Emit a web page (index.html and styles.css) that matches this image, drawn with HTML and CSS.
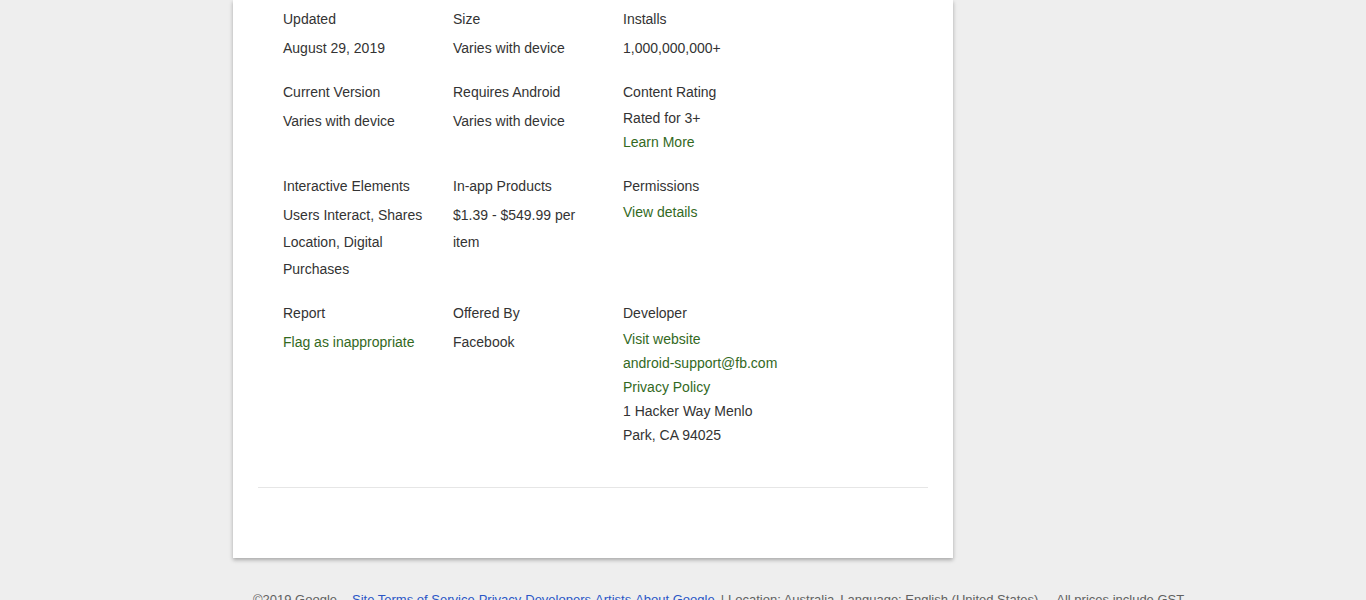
FILE: index.html
```html
<!DOCTYPE html>
<html>
<head>
<meta charset="utf-8">
<link rel="stylesheet" href="styles.css">
</head>
<body>
<div class="page">
  <div class="card">
    <div class="details">
      <div class="row">
        <div class="cell"><div class="label">Updated</div><div class="value">August 29, 2019</div></div>
        <div class="cell"><div class="label">Size</div><div class="value">Varies with device</div></div>
        <div class="cell"><div class="label">Installs</div><div class="value">1,000,000,000+</div></div>
      </div>
      <div class="row">
        <div class="cell"><div class="label">Current Version</div><div class="value">Varies with device</div></div>
        <div class="cell"><div class="label">Requires Android</div><div class="value">Varies with device</div></div>
        <div class="cell"><div class="label">Content Rating</div><div class="list"><div>Rated for 3+</div><div><a class="link" href="#">Learn More</a></div></div></div>
      </div>
      <div class="row">
        <div class="cell"><div class="label">Interactive Elements</div><div class="value">Users Interact, Shares Location, Digital Purchases</div></div>
        <div class="cell"><div class="label">In-app Products</div><div class="value">$1.39 - $549.99 per item</div></div>
        <div class="cell"><div class="label">Permissions</div><div class="list"><div><a class="link" href="#">View details</a></div></div></div>
      </div>
      <div class="row">
        <div class="cell"><div class="label">Report</div><div class="value"><a class="link" href="#">Flag as inappropriate</a></div></div>
        <div class="cell"><div class="label">Offered By</div><div class="value">Facebook</div></div>
        <div class="cell"><div class="label">Developer</div><div class="list"><div><a class="link" href="#">Visit website</a></div><div><a class="link" href="#">android-support@fb.com</a></div><div><a class="link" href="#">Privacy Policy</a></div><div>1 Hacker Way Menlo Park, CA 94025</div></div></div>
      </div>
    </div>
    <div class="divider"></div>
  </div>
  <div class="footer">
    <span class="copy">©2019 Google</span>
    <a href="#">Site Terms of Service</a>
    <a href="#">Privacy</a>
    <a href="#">Developers</a>
    <a href="#">Artists</a>
    <a href="#">About Google</a>
    <span class="sep">|</span>
    <span class="loc">Location: Australia</span>
    <span class="lang">Language: English (United States)</span>
    <span class="gst">All prices include GST.</span>
  </div>
</div>
</body>
</html>
```

FILE: styles.css
```css
html, body {
  margin: 0;
  padding: 0;
  background: #eeeeee;
  font-family: "Liberation Sans", Arial, sans-serif;
  color: #333333;
}
.page {
  width: 720px;
  margin-left: 233px;
}
.card {
  background: #ffffff;
  box-shadow: 0 2px 4px rgba(0, 0, 0, 0.3);
  padding: 7px 25px 70px;
}
.details {
  padding-left: 25px;
}
.row {
  display: grid;
  grid-template-columns: 170px 170px 170px;
  margin-bottom: 18px;
  align-items: start;
}
.label {
  font-size: 14px;
  line-height: 24px;
}
.value {
  font-size: 14px;
  line-height: 27px;
  margin-top: 4px;
  padding-right: 20px;
}
.list {
  font-size: 14px;
  line-height: 24px;
  margin-top: 2px;
  padding-bottom: 2px;
  padding-right: 6px;
}
.link {
  color: #33691e;
  text-decoration: none;
}
.divider {
  margin-top: 38px;
  height: 1px;
  background: #e6e6e6;
}
.footer {
  display: flex;
  align-items: baseline;
  padding: 33px 0 0 20px;
  font-size: 13px;
  line-height: 18px;
  color: #616161;
  white-space: nowrap;
}
.footer a {
  color: #2a56c6;
  text-decoration: none;
  margin-right: 4px;
}
.copy {
  margin-right: 15px;
}
.sep {
  margin: 0 4px 0 2px;
}
.loc {
  margin-right: 6px;
}
.gst {
  margin-left: 18px;
}
```
